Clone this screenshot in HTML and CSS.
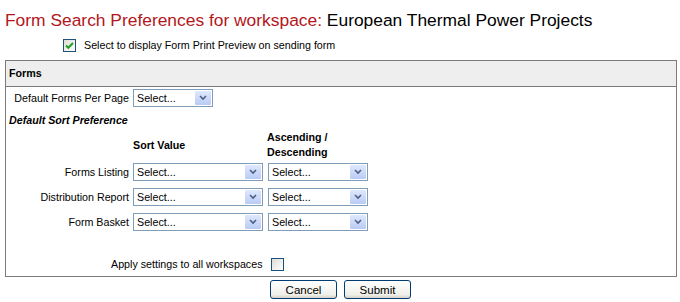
FILE: index.html
```html
<!DOCTYPE html>
<html lang="en">

<head>
  <meta charset="UTF-8">
  <meta name="viewport" content="width=device-width, initial-scale=1.0">
  <title>Form Search Preferences</title>
  <link rel="stylesheet" href="styles.css">
</head>

<body>

  <h1 class="page-title">Form Search Preferences for workspace: <span class="ws-name">European Thermal Power Projects</span></h1>

  <div class="preview-row">
    <span class="check checked">
      <svg width="13" height="13" viewBox="0 0 13 13">
        <path d="M3 6.5 L5.3 8.8 L10 4" fill="none" stroke="#21a121" stroke-width="2"/>
      </svg>
    </span>
    <span>Select to display Form Print Preview on sending form</span>
  </div>

  <div class="panel">
    <div class="panel-head">Forms</div>

    <div class="panel-body">
      <div class="pref-grid">
        <label class="lbl">Default Forms Per Page</label>
        <div class="select small">
          <span class="select-text">Select...</span>
          <span class="select-arrow">
            <svg width="8" height="6" viewBox="0 0 8 6"><path d="M1 1 L4 4 L7 1" fill="none" stroke="#4d6185" stroke-width="1.6"/></svg>
          </span>
        </div>
        <div></div>

        <div class="section-title">Default Sort Preference</div>

        <div></div>
        <div class="col-head">Sort Value</div>
        <div class="col-head">Ascending /<br>Descending</div>

        <label class="lbl">Forms Listing</label>
        <div class="select wide">
          <span class="select-text">Select...</span>
          <span class="select-arrow"><svg width="8" height="6" viewBox="0 0 8 6"><path d="M1 1 L4 4 L7 1" fill="none" stroke="#4d6185" stroke-width="1.6"/></svg></span>
        </div>
        <div class="select narrow">
          <span class="select-text">Select...</span>
          <span class="select-arrow"><svg width="8" height="6" viewBox="0 0 8 6"><path d="M1 1 L4 4 L7 1" fill="none" stroke="#4d6185" stroke-width="1.6"/></svg></span>
        </div>

        <label class="lbl">Distribution Report</label>
        <div class="select wide">
          <span class="select-text">Select...</span>
          <span class="select-arrow"><svg width="8" height="6" viewBox="0 0 8 6"><path d="M1 1 L4 4 L7 1" fill="none" stroke="#4d6185" stroke-width="1.6"/></svg></span>
        </div>
        <div class="select narrow">
          <span class="select-text">Select...</span>
          <span class="select-arrow"><svg width="8" height="6" viewBox="0 0 8 6"><path d="M1 1 L4 4 L7 1" fill="none" stroke="#4d6185" stroke-width="1.6"/></svg></span>
        </div>

        <label class="lbl">Form Basket</label>
        <div class="select wide">
          <span class="select-text">Select...</span>
          <span class="select-arrow"><svg width="8" height="6" viewBox="0 0 8 6"><path d="M1 1 L4 4 L7 1" fill="none" stroke="#4d6185" stroke-width="1.6"/></svg></span>
        </div>
        <div class="select narrow">
          <span class="select-text">Select...</span>
          <span class="select-arrow"><svg width="8" height="6" viewBox="0 0 8 6"><path d="M1 1 L4 4 L7 1" fill="none" stroke="#4d6185" stroke-width="1.6"/></svg></span>
        </div>
      </div>

      <div class="apply-row">
        <span>Apply settings to all workspaces</span>
        <span class="check"></span>
      </div>
    </div>
  </div>

  <div class="buttons">
    <button class="btn">Cancel</button>
    <button class="btn">Submit</button>
  </div>

</body>

</html>
```

FILE: styles.css
```css
body {
  margin: 0;
  font-family: "Liberation Sans", Arial, sans-serif;
  font-size: 10.7px;
  color: #000;
  background: #fff;
}

.page-title {
  margin: 8px 0 0 5px;
  font-size: 17.4px;
  font-weight: normal;
  line-height: 24px;
  color: #b3161c;
}

.page-title .ws-name {
  color: #000;
}

.preview-row {
  display: flex;
  align-items: center;
  gap: 8px;
  margin: 6px 0 0 63px;
  height: 14px;
}

.check {
  display: inline-block;
  box-sizing: border-box;
  width: 13px;
  height: 13px;
  border: 1px solid #1c5180;
  background: linear-gradient(135deg, #dcdcd7, #fff);
}

.check svg {
  display: block;
  margin: -1px;
}

.panel {
  margin: 8px 3px 0 5px;
  border: 1px solid #7a7a7a;
}

.panel-head {
  background: #eeeeee;
  border-bottom: 1px solid #7a7a7a;
  height: 25px;
  line-height: 25px;
  padding-left: 3px;
  font-weight: bold;
}

.panel-body {
  padding-top: 2px;
}

.pref-grid {
  display: grid;
  grid-template-columns: 123px 130px 101px;
  grid-template-rows: 25px 15px 34px 25px 25px 25px;
  column-gap: 4px;
  align-items: start;
}

.lbl {
  text-align: right;
  height: 18px;
  line-height: 18px;
}

.section-title {
  grid-column: 1 / 4;
  font-weight: bold;
  font-style: italic;
  padding-left: 3px;
  line-height: 13px;
}

.col-head {
  font-weight: bold;
  line-height: 15px;
  height: 30px;
  padding-top: 1px;
  display: flex;
  align-items: center;
}

.select {
  box-sizing: border-box;
  height: 18px;
  border: 1px solid #7f9db9;
  display: flex;
  align-items: center;
  background: #fff;
}

.select.small {
  width: 80px;
}

.select.narrow {
  margin-left: 1px;
  width: 100px;
}

.select-text {
  flex: 1;
  padding-left: 3px;
}

.select-arrow {
  width: 16px;
  height: 14px;
  margin-right: 1px;
  background: linear-gradient(#dfe8fc, #b9cbf5);
  border-radius: 1px;
  display: flex;
  align-items: center;
  justify-content: center;
}

.apply-row {
  display: flex;
  align-items: center;
  gap: 9px;
  margin: 19px 0 5px 105px;
  height: 14px;
}

.buttons {
  display: flex;
  gap: 7px;
  margin: 3px 0 0 270px;
}

.btn {
  width: 67px;
  height: 19px;
  padding: 0;
  font-family: inherit;
  font-size: 11.5px;
  color: #000;
  border: 1px solid #003c74;
  border-radius: 3px;
  background: linear-gradient(#fefefe, #f0f0ea 80%, #d6d0c5);
}
```
